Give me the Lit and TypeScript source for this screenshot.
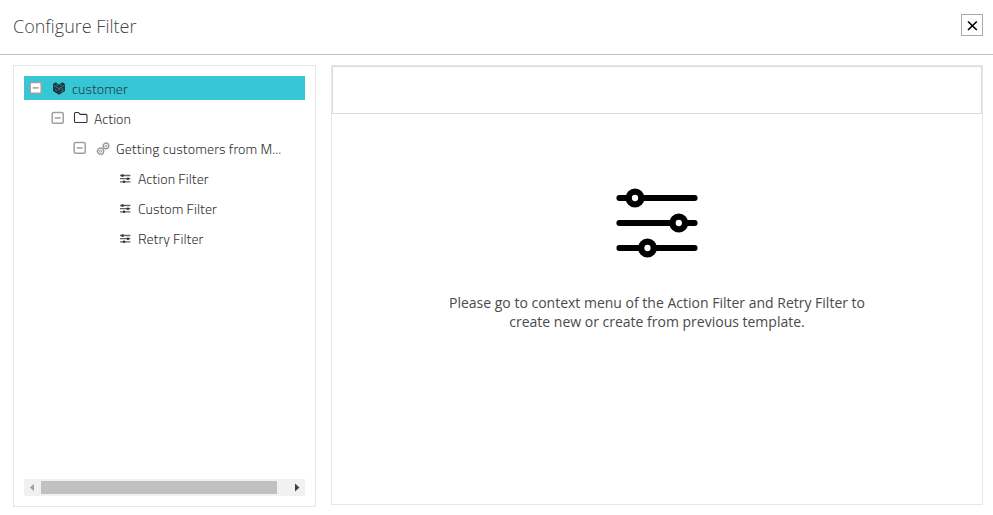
import { LitElement, html, svg, css } from "lit";
import { customElement } from "lit/decorators.js";
import { classMap } from "lit/directives/class-map.js";

interface Node {
  label: string;
  icon: "cube" | "folder" | "gears" | "sliders";
  level: number;
  leaf?: boolean;
  selected?: boolean;
}

const NODES: Node[] = [
  { label: "customer", icon: "cube", level: 0, selected: true },
  { label: "Action", icon: "folder", level: 1 },
  { label: "Getting customers from M...", icon: "gears", level: 2 },
  { label: "Action Filter", icon: "sliders", level: 3, leaf: true },
  { label: "Custom Filter", icon: "sliders", level: 3, leaf: true },
  { label: "Retry Filter", icon: "sliders", level: 3, leaf: true },
];

const ICONS = {
  cube: svg`<path fill="#20333a" d="M2 4 4.8 2.2 8 4.8l3.2-2.6L14 4v7.1l-6 3.7-6-3.7z"/>
    <path fill="none" stroke="#2f8f9b" stroke-width=".9" d="M2.5 5.4 8 8.5l5.5-3.1M5 4.3l1.8 1.4M11 4.3 9.2 5.7M8.2 8.5v2.6M9.8 12.1l2.9-1.8M11.2 8v2.6M4 9.5l2 1.2"/>`,
  folder: svg`<path fill="none" stroke="#333" stroke-width="1.1" stroke-linejoin="round" d="M1.5 3.5q0-1 1-1h3l1.6 1.9h5.8q1.1 0 1.1 1.1v5.9q0 1.1-1.1 1.1H2.6q-1.1 0-1.1-1.1z"/>`,
  gears: svg`<g fill="none" stroke="#999"><circle cx="5.6" cy="11.2" r="3" stroke-width="1.3"/><circle cx="5.6" cy="11.2" r="1" stroke-width="1"/>
    <circle cx="11" cy="5.9" r="2.7" stroke-width="1.3"/><circle cx="11" cy="5.9" r=".8" stroke-width=".9"/>
    <path stroke-width=".6" stroke-dasharray="1 1" d="M1.9 11.2a3.7 3.7 0 1 0 7.4 0 3.7 3.7 0 1 0-7.4 0M7.7 5.9a3.3 3.3 0 1 0 6.6 0 3.3 3.3 0 1 0-6.6 0"/></g>`,
  sliders: svg`<path stroke="#666" stroke-width="1.3" d="M3 5.5h10.4M3 8.7h10.4M3 11.9h10.4"/>
    <g fill="#333"><circle cx="5.6" cy="5.6" r="1.3"/><circle cx="10.9" cy="8.7" r="1.3"/><circle cx="7" cy="11.8" r="1.3"/></g>`,
};

@customElement("filter-tree")
class FilterTree extends LitElement {
  static styles = css`
    :host { display: flex; flex-direction: column; box-sizing: border-box; width: 303px; height: 442px; padding: 10px; border: 1px solid #e7e7e7; }
    .rows { flex: 1; display: flex; flex-direction: column; gap: 6px; }
    .row { display: flex; align-items: center; height: 24px; box-sizing: border-box; padding-left: 5px; color: #333; }
    .level1 { padding-left: 27px; }
    .level2 { padding-left: 49px; }
    .level2 .label { letter-spacing: .09px; }
    .level3 { padding-left: 93px; }
    .level3 .label { letter-spacing: .04px; }
    .selected { background: #36c6d6; color: #24434a; }
    .toggle { width: 13px; height: 13px; margin: 0 9px 1px 0; flex: none; }
    .icon { width: 16px; height: 16px; margin-right: 5px; flex: none; }
    .label { font: 300 14px/24px "Titillium Web", Roboto, sans-serif; white-space: nowrap; padding-top: 2px; }
    .scroll { display: flex; align-items: center; height: 17px; background: #f1f1f1; }
    .arrow { width: 17px; height: 17px; flex: none; }
    .thumb { width: 236px; height: 13px; background: #c1c1c1; }
    .gap { flex: 1; }
  `;
  render() {
    return html`
      <div class="rows">
        ${NODES.map((n) => html`
          <div class=${classMap({ row: true, ["level" + n.level]: true, selected: !!n.selected })}>
            ${n.leaf ? "" : html`<svg class="toggle" viewBox="0 0 13 13">
              <rect x="1.2" y="1.5" width="11" height="10.8" rx="1.3" fill="#fff" stroke="#a0a0a0" stroke-width="1.5"/>
              <path d="M3.7 6.9h6" stroke="#999" stroke-width="1.4"/></svg>`}
            <svg class="icon" viewBox="0 0 16 16">${ICONS[n.icon]}</svg>
            <span class="label">${n.label}</span>
          </div>`)}
      </div>
      <div class="scroll">
        <svg class="arrow" viewBox="0 0 17 17"><path fill="#a3a3a3" d="M10 4.8v7.4L5.8 8.5z"/></svg>
        <div class="thumb"></div><div class="gap"></div>
        <svg class="arrow" viewBox="0 0 17 17"><path fill="#404040" d="M7 4.5v8l4.4-4z"/></svg>
      </div>`;
  }
}

@customElement("filter-detail")
class FilterDetail extends LitElement {
  static styles = css`
    :host { display: flex; flex-direction: column; align-items: center; box-sizing: border-box; width: 652px; height: 440px; border: 1px solid #e7e7e7; }
    .bar { align-self: stretch; box-sizing: border-box; height: 48px; border: 1px solid #d8dadb; }
    .art { width: 84px; height: 72px; margin-top: 73px; }
    .hint { margin: 34px 0 0; width: 440px; text-align: center; font: 400 14px/19px "Open Sans", sans-serif; color: #4a4a4a; }
  `;
  render() {
    return html`
      <div class="bar"></div>
      <svg class="art" viewBox="0 0 84 72">
        <path d="M4.4 11h75.2M4.4 36h75.2M4.4 61h75.2" stroke="#000" stroke-width="6" stroke-linecap="round"/>
        <g fill="#fff" stroke="#000" stroke-width="6.3"><circle cx="20" cy="11" r="6.3"/><circle cx="63.8" cy="36" r="6.3"/><circle cx="32.5" cy="61" r="6.3"/></g>
      </svg>
      <p class="hint">Please go to context menu of the Action Filter and Retry Filter to<br>create new or create from previous template.</p>`;
  }
}

@customElement("app-root")
class AppRoot extends LitElement {
  static styles = css`
    :host { display: block; width: 993px; height: 515px; overflow: hidden; background: #fff; }
    header { display: flex; justify-content: space-between; align-items: flex-start; box-sizing: border-box; height: 55px; padding: 14px 10px 0 13px; border-bottom: 1px solid #c1c1c1; }
    h1 { margin: 0; font: 300 18px/25px "Open Sans", sans-serif; color: #444; }
    button { display: block; box-sizing: border-box; width: 22px; height: 22px; padding: 0; border: 1px solid #9eabb8; background: #fff; }
    button svg { display: block; width: 20px; height: 20px; }
    main { display: flex; align-items: flex-start; gap: 15px; padding: 10px 10px 0 13px; }
  `;
  render() {
    return html`
      <header>
        <h1>Configure Filter</h1>
        <button aria-label="Close"><svg viewBox="0 0 20 20"><path d="m6 6.5 8.8 8.5m0-8.5L6 15" stroke="#000" stroke-width="1.6"/></svg></button>
      </header>
      <main><filter-tree></filter-tree><filter-detail></filter-detail></main>`;
  }
}
